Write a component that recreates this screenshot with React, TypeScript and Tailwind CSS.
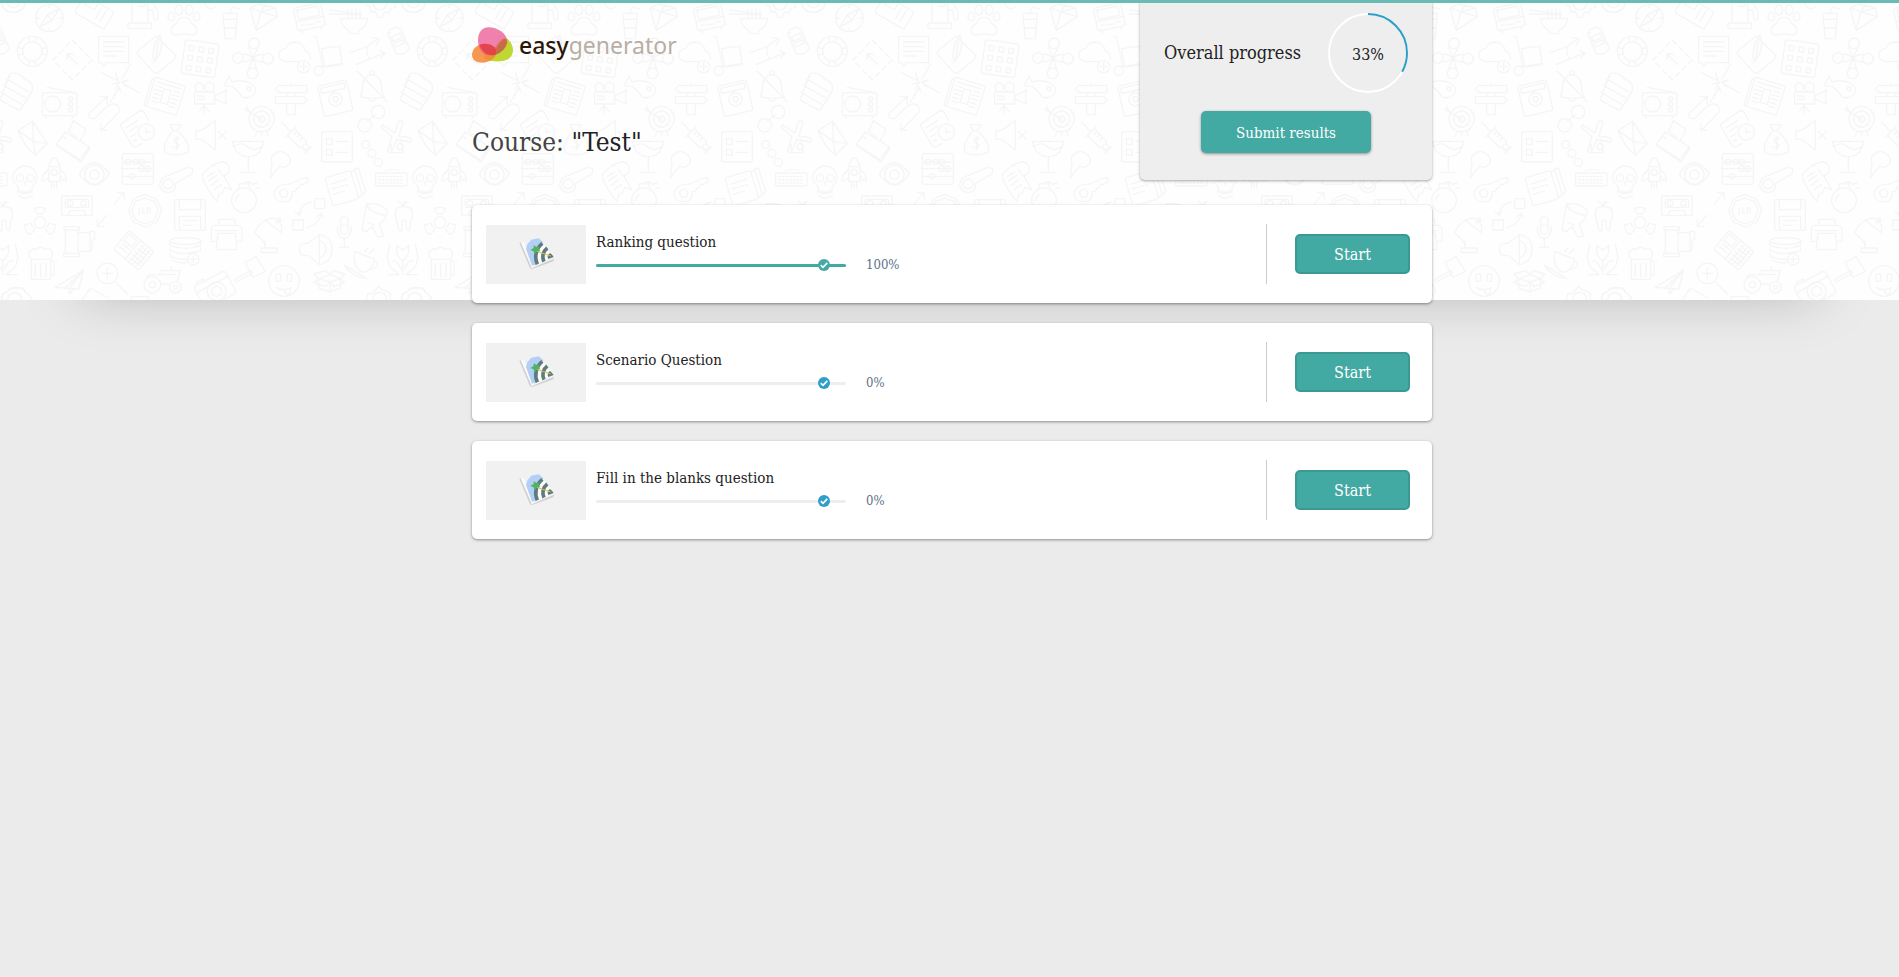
import React from "react";

const courseTitle = "Test";

const questions = [
  { id: "ranking", title: "Ranking question", progress: 100 },
  { id: "scenario", title: "Scenario Question", progress: 0 },
  { id: "blanks", title: "Fill in the blanks question", progress: 0 },
];

/* Doodles of one wallpaper tile, drawn on a 1200 x 900 grid. */
function Doodles() {
  return (
    <g id="doodles" fill="none" stroke="#f5f5f5" strokeWidth="4" strokeLinejoin="round" strokeLinecap="round">
      {/* compass, card, pump, paw */}
      <circle cx="148" cy="54" r="41" />
      <path d="M120 80l22-35 36-20-22 37zM142 45l14 17M148 13v10M148 85v10M107 54h10M179 54h10" />
      <g transform="rotate(30 282 36)"><rect x="232" y="6" width="102" height="60" rx="6" /><path d="M246 -4v34h34v-34M296 14v38M312 14v38" /></g>
      <path d="M396 9v60M444 9v60M384 69h70v16h-70zM414 -5h22v24h-22M444 30h16v24q6 14 14 0v-20l-14-24" />
      <path d="M552 52q-16 0-22 18-18 10-17 22 4 16 22 12 17-4 34 0 20 4 22-12 1-12-17-22-6-18-22-18z" />
      <ellipse cx="537" cy="30" rx="11" ry="15" /><ellipse cx="567" cy="30" rx="11" ry="15" /><ellipse cx="514" cy="50" rx="10" ry="13" /><ellipse cx="590" cy="50" rx="10" ry="13" />
      <path d="M668 40h44l-6 76h-30zM671 58h38M690 40l6-18 24 4M672 84h34" />
      <path d="M776 12l50 12 6 26-64 42-18-68zM750 24l32 12 44-12M782 36l-14 56M782 36l50 14M796 14l-14 22" />
      <g transform="rotate(-12 928 52)"><rect x="886" y="16" width="84" height="70" rx="8" /><rect x="896" y="24" width="64" height="28" /><path d="M886 58h84M898 70h12M946 70h12M918 74h20M898 86v8M956 86v8" /></g>
      <path d="M1022 56h80q-2 26-24 34l-4 10h-24l-4-10q-22-8-24-34zM990 42h96M990 30l60 8M1044 54V30M1056 54V28M1068 54V26M1080 54V30" />
      <path d="M1098 14l12 6 2 16 14-2 6 18h14l6-16 14 4 6-14 14-4v-18M1118 9q4 20 22 20t22-20M1204 9q8 28 36 28t36-28M1222 9q4 14 18 14t18-14M4 9q8 28 36 28t36-28M612 9q14 26 34 12" />
      {/* buoy, crop mark, chat, feather, calendar */}
      <circle cx="97" cy="154" r="45" /><circle cx="97" cy="154" r="29" />
      <path d="M85 111l5 15M109 111l-5 15M85 197l5-15M109 197l-5-15M54 142l15 5M54 166l15-5M140 142l-15 5M140 166l-15-5" />
      <path d="M217 120l60 60-60 60-58-60z" strokeDasharray="16 12" /><path d="M234 194l-34-32M200 178v-16h20" />
      <path d="M296 109h90v79h-66l-10 10-4-10h-10zM310 126h62M310 140h62M310 154h62M310 168h40" />
      <path d="M468 108l56 54q6 8 0 14l-50 42q-6 4-12 0l-48-54q-6-8 0-12zM462 190q-10-50 18-86 14 36-12 76M466 180l10-60" />
      <g transform="rotate(8 600 176)"><rect x="549" y="125" width="102" height="102" rx="8" />
        {[148, 178, 208].map((y) => [570, 600, 630].map((x) => <rect key={`${x}-${y}`} x={x - 7} y={y - 7} width="14" height="14" />))}
      </g>
      <circle cx="762" cy="130" r="16" /><circle cx="758" cy="220" r="16" /><circle cx="714" cy="174" r="16" /><circle cx="804" cy="176" r="16" />
      <path d="M726 162q14-2 32 12l-12-32M774 142l-16 32q18-14 34-10M726 186q14 2 32-12l-12 32M770 206l-12-32q18 14 34 12" />
      <path d="M895 184h-38q-20-2-20-20 2-18 20-18 6-20 30-20 24 2 28 26 18 6 16 26" /><circle cx="911" cy="200" r="18" /><path d="M911 190v20M901 200h20" />
      <path d="M940 110l10 2 18 86M962 200l66-10" /><circle cx="956" cy="212" r="14" /><rect x="969" y="142" width="54" height="56" transform="rotate(-8 996 170)" />
      <path d="M1050 158l50-18 30-22M1118 114l18 2-6 20M1068 194l40-16 42-18M1140 150l16 10-14 14M1104 140q-8 16 4 38" />
      <g transform="rotate(-24 1195 122)"><path d="M1174 90h8v-8h26v8h8v66q-20 16-42 0zM1180 104h30v14h-30zM1180 124h30v12h-30z" /></g>
      {/* shop, radio, arrows, burst, paper, film, fish, sign, washer, bell */}
      <path d="M30 222q14-6 28 2l34 24q8 10 4 26l-36 58-60-32zM20 236l66 40M10 256l68 38M2 276l64 38M30 222l-14 28" />
      <path d="M216 276l-74-14M134 349l6 6M222 349l-6 6" /><rect x="127" y="278" width="104" height="69" rx="8" /><circle cx="158" cy="312" r="24" /><circle cx="212" cy="296" r="6" /><circle cx="212" cy="313" r="6" /><circle cx="212" cy="330" r="6" />
      <path d="M300 290h22v22M322 290l-48 44q-14 14-2 20 10 4 18-4l30-30q14-14 32-4 14 12 0 26l-48 48M302 372v18h18" />
      <path d="M304 218l46 22M346 216l8 26M390 194l-22 40M418 278l-46-26M332 306l26-46M386 240l-22 6 16 14M340 252l18-6-12 20M358 262l4 14" />
      <g transform="rotate(17 495 290)"><rect x="450" y="242" width="94" height="92" rx="3" /><path d="M450 250h-8v76q0 8 10 8M460 254h74M460 266h20M460 278h20M460 290h20M460 302h20M460 314h20M514 266h20M514 278h20M514 290h20M514 302h20M514 314h20" /><rect x="486" y="268" width="22" height="42" /></g>
      <circle cx="598" cy="262" r="13" /><circle cx="629" cy="261" r="14" /><path d="M584 276h60v36h-60zM592 288h20v10h-20M644 290l34-20v42l-34-16M612 312v28M612 316l-14 20M612 316l16 20" />
      <path d="M672 256l16-28 8 18q30-10 60 6 16 16 8 28-20 22-40 8-8-14-28-28z" /><circle cx="747" cy="266" r="6" />
      <path d="M838 256h82v22h-82l-12-11zM826 290h84l12 10-12 11h-84zM860 312v32h26v-32M872 250v6M860 278v12M886 278v12" />
      <g transform="rotate(-13 1005 296)"><rect x="962" y="248" width="88" height="94" rx="6" /><rect x="970" y="256" width="72" height="16" /><circle cx="1006" cy="298" r="20" /><circle cx="1006" cy="298" r="8" /></g>
      <path d="M1080 290q8-10 8-34 4-30 28-32 24 2 28 32 0 24 10 34-36 10-74 0zM1072 214l90 92M1106 296q10 18 22 0" /><circle cx="1117" cy="218" r="7" />
      {/* envelope, briefcase, note, bag, mute, target, syringe, list, chain, mill */}
      <path d="M54 392l44-28 44 66-36 36q-36-30-52-74zM54 392l46 32 -2-60M100 424l42 6M100 424l6 42" />
      <path d="M220 362l38 26-16 32M220 362l-14 32 24 18M168 434l28-38 74 46-6 12-22 32zM168 434l70 44 28-34M190 410l10 6" />
      <path d="M360 374l60-42q8-2 12 4l14 26M360 374l36 62q6 8 14 4l16-10M378 384l34-22M384 396l30-18M392 410l16-8M400 424l12-6" /><circle cx="439" cy="396" r="24" /><path d="M438 382v16l12-4" />
      <path d="M510 374h34l-12 18q38 32 34 62-30 20-70 4-12-26 24-66zM518 392h16M538 416q-12-8-16 4 4 10 10 10 10 6 4 12-8 6-16-2M530 410v40" />
      <path d="M588 392h16l42-30v88l-42-32h-16zM654 394l26 24M680 394l-26 24" />
      <circle cx="785" cy="357" r="38" /><circle cx="785" cy="357" r="24" /><circle cx="785" cy="357" r="9" /><path d="M734 326l50 32M740 318l8 18M770 394l-4 16M784 396v12M800 394l4 14" />
      <g transform="rotate(46 890 415)"><rect x="864" y="400" width="56" height="28" rx="4" /><path d="M824 414h40M876 400v12M888 400v12M900 400v12M920 406h14v16h-14M940 400v28M864 392v44" /></g>
      <rect x="965" y="395" width="92" height="91" rx="6" /><rect x="979" y="416" width="18" height="17" /><rect x="979" y="449" width="18" height="17" /><path d="M1008 424h38M1008 457h38" />
      <circle cx="1134" cy="336" r="20" /><circle cx="1094" cy="376" r="20" /><path d="M1102 364l24-20" /><circle cx="1097" cy="434" r="12" /><circle cx="1116" cy="460" r="12" /><circle cx="1135" cy="487" r="12" />
      <path d="M1196 362l14 2-14 44 38 6-2 12-42-8-16 40-12-4 14-44-32-28 4-8 36 26zM1172 430l4 28h34l-6-40" /><circle cx="1200" cy="440" r="9" />
      {/* skull, rocket, eye, abacus, thermometer, scroll, goblet, cone, bomb, key, book, keyboard */}
      <path d="M54 560q-20-14-14-38 12-24 36-24 28 2 34 26 4 24-14 36v10l-20 8-22-8zM52 574q24 14 46 0M54 586q22 16 44 0" /><circle cx="60" cy="534" r="11" /><circle cx="92" cy="534" r="11" /><path d="M76 544v12" />
      <path d="M146 544v-42q4-22 16-30 14 8 18 30v42zM146 500h34M144 510l-12 12-6 20h10l10-12M182 510l12 12 6 20h-10l-8-12M154 544v18M162 548v18M170 544v18" /><circle cx="163" cy="517" r="9" />
      <path d="M238 522q44-68 90 0-46 66-90 0z" /><circle cx="283" cy="524" r="29" /><circle cx="283" cy="524" r="14" />
      <rect x="367" y="461" width="93" height="92" rx="5" /><path d="M367 486h93M367 506h93M367 529h93" /><circle cx="384" cy="486" r="8" /><circle cx="406" cy="486" r="8" /><circle cx="426" cy="486" r="8" /><circle cx="424" cy="506" r="8" /><circle cx="442" cy="506" r="8" /><circle cx="397" cy="529" r="8" />
      <path d="M506 526l52-22q20-4 20 6 0 12-10 16l-42 24q4 20-16 27-24 2-31-19 0-28 27-32z" /><circle cx="504" cy="552" r="15" />
      <path d="M606 524q28-32 62-40 22 6 20 28-6 16-24 12l-8-16M606 524q6 36 44 80l8-22 10-4 6-16 22 8-26-44M622 530l22-14M626 542l24-16M634 556l24-18M644 568l20-14" />
      <path d="M698 424h92q-2 38-36 46h-16q-38-10-40-46zM704 438q22-14 40 2t42 0M745 472v44M722 517h46" />
      <path d="M816 492q-8-24 12-34 20-8 30 4 18 10 12 28-14 18-32 8l-28 36 6-42z" />
      <circle cx="732" cy="601" r="37" /><path d="M718 566l-2-14 30-2 4 16M732 550q10-12 26 4l14-6M768 566l8-2M706 602q2-14 14-20" />
      <path d="M870 552l46-20q12 2 8 12l-14 10-8-2-4 10-8 2-2 8-12 4q4 24-20 30-30 0-34-24 6-30 34-28z" /><circle cx="851" cy="580" r="12" />
      <g transform="rotate(-17 1035 560)"><rect x="984" y="518" width="80" height="88" rx="6" /><path d="M996 540h50M996 556h50M996 572h34M1064 522h14v80h-14M1078 518h12v70l-6 10" /></g>
      <rect x="1127" y="519" width="94" height="39" rx="3" /><path d="M1150 518q20-16 50-6M1136 530h76M1136 540h76M1136 549h76" strokeDasharray="5 6" />
      {/* radiation, cassette, arrows, sign, floppy, printer, dish, flow, mic, dryer, tooth */}
      <circle cx="120" cy="668" r="17" /><path d="M102 626q18-8 34 0l-8 16h-16zM74 674l18-4 12 20-14 14q-16-10-16-30zM166 674l-18-4-12 20 14 14q16-10 16-30z" />
      <rect x="185" y="588" width="92" height="58" rx="3" /><rect x="196" y="598" width="70" height="24" rx="4" /><circle cx="210" cy="610" r="8" /><circle cx="251" cy="610" r="8" /><path d="M204 646l6-14h42l6 14" />
      <path d="M342 612l28-32M352 578h20v20M320 646l-28 32M292 660v20h20" />
      <path d="M435 583l34 14 16 34-14 34-34 16-36-14-15-34 14-36zM435 594l28 10 12 28-12 28-28 12-28-12-12-28 12-28zM418 624v18l-4 2M428 624v16h8M442 640v-16h8v16" />
      <rect x="524" y="599" width="92" height="92" rx="5" /><path d="M538 599v30h64v-30M538 691v-42h64v42M550 662h42M550 676h26" />
      <path d="M656 676v-18h48v18M644 676h72q10 4 10 12v36h-18M632 724h18M650 724h-16v-38q2-8 10-10M654 700h52l6 49h-64zM646 692h66" />
      <path d="M796 660q-26 20-32 38l26 26 8 20M784 744h48v14h-48zM798 744l-4-20M796 660l48 38q4-20-6-32-16-20-42-6zM826 672l16-14" /><circle cx="836" cy="660" r="6" />
      <rect x="944" y="596" width="30" height="30" /><rect x="879" y="660" width="31" height="30" /><path d="M934 606q-34 8-38 38M886 634l10 12 10-12M920 682q34-6 42-36M950 652l12-12 8 14" />
      <rect x="1022" y="649" width="22" height="54" rx="11" /><path d="M1012 680q0 34 21 34t21-34M1033 714v28M1018 742h28M1022 676h22" />
      <path d="M1100 612q40-6 62 20-2 26-24 40l12 36-16 4-18-32-16 14-14-4zM1100 612q8 26 54 34M1104 668l20 8" />
      <path d="M1190 624q22-10 44 2 6 22-2 40l-4 24-8-2-2-24q-8-8-12 2v28l-10-6-6-26q-8-18 0-38zM1196 604l14 14 10-14M1212 604v12" />
      {/* beer, pipe, calculator, coins, speaker, cup, tulip */}
      <path d="M94 838v-62q-14-10-4-22 8-10 20-6 12-12 24 0 14-8 22 8 4 14-4 18v64zM94 778h58M106 790v40M122 790v40M138 790v40M152 784h10v42h-10" />
      <path d="M192 680h46v10h-46zM196 690v70M234 690v70M190 760h48v10h-48zM234 698h36v56h-36M270 694h14v24l-8 4v30h-6" />
      <g transform="rotate(40 402 752)"><rect x="352" y="716" width="98" height="72" rx="4" /><path d="M398 716v72M360 724h30v24h-30zM406 728h38M406 740h38M406 752h38M406 764h38M406 776h38M414 722v60M426 722v60M438 722v60M360 758h30M360 770h30" /></g>
      <ellipse cx="556" cy="723" rx="46" ry="10" /><path d="M510 726v10q46 18 92 0v-10M510 744v8q40 18 92 0v-8M510 762v8q24 10 52 8M516 780q16 10 44 8" /><circle cx="580" cy="778" r="17" /><path d="M580 768v20M570 778h20" />
      <path d="M958 704v90l-34-28h-18q-16-18 0-36h18zM958 704q38 6 38 44t-38 46M958 722q20 6 20 26t-20 26" />
      <path d="M1064 754l60 24q-8 38-36 38-30-8-24-62zM1122 782q16 6 8 18-8 10-20 4M1034 796l66 40M1034 796q20 34 66 40M1094 756l10-12M1108 762l16-18" />
      <path d="M1190 736l18 14 18-14q4 34-18 46-22-12-18-46zM1208 782v40M1170 734q-14 40 0 66l28 24h-34M1246 734q14 40 0 66l-28 24h34M1176 786q6-10 18 4l10 18M1240 786q-6-10-18 4l-10 18" />
      {/* plane, lens, tractor, photo, gavel, smiley, box */}
      <path d="M250 810l-84 52 30 2 40 4zM196 864l54-54-42 56v16l12-14" />
      <circle cx="322" cy="820" r="31" /><path d="M344 844l38 38M322 804v32M306 820h32" />
      <circle cx="457" cy="854" r="25" /><circle cx="457" cy="854" r="9" /><circle cx="526" cy="862" r="17" /><circle cx="526" cy="862" r="6" /><path d="M440 832l10-8h30v-12h60l-8 32M482 852h26M482 824h44M514 800v12" />
      <g transform="rotate(-28 643 865)"><rect x="590" y="832" width="106" height="76" rx="10" /><path d="M590 852h106M604 832v-8h22v8" /><circle cx="645" cy="876" r="28" /><circle cx="645" cy="876" r="15" /></g>
      <path d="M702 840l50-28 4 8-46 26zM736 788l22 44 38-18-28-44zM736 788l32-18" />
      <circle cx="852" cy="843" r="46" /><rect x="828" y="821" width="14" height="24" rx="7" /><rect x="861" y="821" width="14" height="24" rx="7" /><path d="M830 862q22 14 44 0M852 868q2 16 14 14 8-4 4-16" />
      <path d="M956 836v28l34 12 32-12v-28M990 846v30M956 836l34 10-12 14-36-12zM1022 836l-32 10 12 14 32-12zM956 836l-14-14 36-10 12 12M1022 836l12-14-34-10-10 12M956 836l34-12 32 12" />
      <path d="M1100 900l4-20 14 2 8-12 10-10 12 10 16 6 8 6-2 14 8 8M1118 900q2-22 22-22t20 22M1206 900q-2-22 16-24 10-16 26-12 24-4 28 14 16 6 18 22M1222 900q4-22 22-22t22 22M6 900q-2-22 16-24 10-16 26-12 24-4 28 14 16 6 18 22M22 900q4-22 22-22t22 22M246 900l26-36 52 30M394 900v-10h50v10" />
    </g>
  );
}

function Wallpaper() {
  return (
    <div
      aria-hidden="true"
      className="absolute inset-x-0 top-0 h-[300px] bg-[#fefefe] shadow-[0_70px_60px_-80px_rgba(0,0,0,0.27)]"
    >
      <svg className="block h-full w-full">
        <defs>
          <pattern id="tile" width="400" height="300" patternUnits="userSpaceOnUse">
            <g transform="scale(0.33333)">
              <Doodles />
              <use href="#doodles" x="-1200" />
            </g>
          </pattern>
        </defs>
        <rect width="100%" height="100%" fill="url(#tile)" />
      </svg>
    </div>
  );
}

function Logo() {
  return (
    <a href="#home" className="flex h-9 items-center gap-[6px]">
      <svg viewBox="0 0 123 108" className="h-9 w-[41px]" aria-hidden="true">
        <path d="M98 34c14 0 25 19 25 36 0 21-17 32-40 33-20 1-46-2-47-12 0-11 14-15 26-24 14-11 22-32 36-33z" fill="#bfd730" />
        <path d="M0 83C0 66 16 51 36 50c22-1 37 10 37 25 0 18-21 32-42 32C12 107 0 98 0 83z" fill="#f58634" fillOpacity="0.85" />
        <path d="M18 38C19 15 31 1 50 1c27 0 54 19 56 41 1 20-24 43-54 43-20 0-35-22-34-47z" fill="#e9508c" fillOpacity="0.72" />
        <path d="M23 53c22-8 50 2 50 22 0 3-1 6-3 9-20 4-40-8-47-31z" fill="#e03a3e" fillOpacity="0.75" />
        <path d="M70 84c3-6 4-12 1-18 8-10 15-26 26-31 4 1 8 4 8 10-2 18-18 33-35 39z" fill="#c4683c" fillOpacity="0.8" />
      </svg>
      <span className="font-['Noto_Sans',sans-serif] text-[23px] leading-[34px] text-[#b9aea4]">
        <span className="font-medium text-[#2b1708]">easy</span>generator
      </span>
    </a>
  );
}

function ProgressRing({ value }: { value: number }) {
  return (
    <div className="relative flex size-20 items-center justify-center">
      <svg viewBox="0 0 80 80" className="absolute inset-0 size-20 -rotate-90" aria-hidden="true" fill="none" strokeWidth="2">
        <circle cx="40" cy="40" r="39" stroke="#fff" />
        <circle cx="40" cy="40" r="39" stroke="#2d9fc9" pathLength={100} strokeDasharray={`${value} 100`} />
      </svg>
      <span className="relative pt-1 text-[16px] leading-5">{value}%</span>
    </div>
  );
}

function Thumbnail() {
  return (
    <svg viewBox="78 105 300 177" className="h-[59px] w-[100px] shrink-0 bg-[#f1f1f1]" aria-hidden="true">
      <path d="M212 236l70-30-2 8-66 24z" fill="#cfcfcf" />
      <path d="M180 158l12-2 30 72-10 8z" fill="#fafafa" />
      <path d="M178 158l4-1 32 74-3 6z" fill="#cfcfcf" />
      <path d="M214 230L282 202l-36-46-36 20z" fill="#fbfbfb" />
      <path d="M216 227l-18-50 4-14 12-14 22-4 14 12q-26 26-20 66z" fill="#b4cff5" />
      <g fill="none" stroke="#5f7c7c" strokeWidth="11">
        <path d="M247 160A53 53 0 0 0 232 223" />
        <path d="M262 174A33 33 0 0 0 252 215" />
      </g>
      <path d="M270 189q6 4 11 12l-16 6q-6-10 5-18z" fill="#5f7c7c" />
      <path d="M230 184l42 14" stroke="#e0c052" strokeWidth="3" />
      <path d="M211 180l10-6 0-8 10 6 8-2-2 8 4 6-10 0-8 10-2-10z" fill="#4fb364" />
    </svg>
  );
}

function ProgressBar({ value, labelledBy }: { value: number; labelledBy: string }) {
  const done = value === 100;
  return (
    <div
      role="progressbar"
      aria-labelledby={labelledBy}
      aria-valuenow={value}
      className="relative h-[3px] w-[250px] rounded-full bg-[#eeeeee]"
    >
      <div className="h-full rounded-full bg-[#43a9a3]" style={{ width: `${value}%` }} />
      <svg
        viewBox="0 0 12 12"
        className={`absolute -top-[5px] right-4 size-3 ${done ? "text-[#43a9a3]" : "text-[#2d9fc9]"}`}
        aria-hidden="true"
      >
        <circle cx="6" cy="6" r="6" fill="currentColor" />
        <path d="M2.8 6.2l2.2 2.2 4.3-4.6" fill="none" stroke="#fff" strokeWidth="1.7" />
      </svg>
    </div>
  );
}

export default function App() {
  return (
    <div className="relative min-h-screen bg-[#ebebeb] font-['Roboto_Slab','DejaVu_Serif_Condensed','DejaVu_Serif',serif] text-[#222]">
      <Wallpaper />
      <div className="absolute inset-x-0 top-0 z-10 h-[3px] bg-[#68bcb4]" />
      <div className="relative pl-[5px]">
        <div className="mx-auto max-w-[960px]">
          <header className="flex items-start justify-between">
            <div className="flex flex-col pt-[27px]">
              <Logo />
              <h1 className="mt-[61px] text-[26px] leading-9 font-light text-[#444]">
                Course: <span className="font-normal text-[#222]">"{courseTitle}"</span>
              </h1>
            </div>
            <section className="flex h-[180px] w-[292px] flex-col items-center rounded-b-[5px] bg-[#eeeeee] pt-[13px] shadow-[0_1px_3px_rgba(0,0,0,0.35)]">
              <div className="flex w-full items-center justify-between px-6">
                <h2 className="text-[18px] leading-6">Overall progress</h2>
                <ProgressRing value={33} />
              </div>
              <button className="mt-[18px] h-[42px] w-[170px] rounded-[5px] bg-[#43a9a3] pt-[3px] text-[15px] font-medium text-white shadow-[0_1px_3px_rgba(0,0,0,0.4)]">
                Submit results
              </button>
            </section>
          </header>

          <ul className="mt-[25px] flex flex-col gap-5 pb-10">
            {questions.map((q) => (
              <li
                key={q.id}
                className="flex h-[98px] items-center rounded-[5px] bg-white pr-[22px] pl-[14px] shadow-[0_1px_3px_rgba(0,0,0,0.4)]"
              >
                <Thumbnail />
                <div className="ml-[10px] flex-1">
                  <h3 id={q.id} className="text-[15px] leading-[22px]">{q.title}</h3>
                  <div className="flex h-6 items-center gap-5">
                    <ProgressBar value={q.progress} labelledBy={q.id} />
                    <span className="text-[13px] leading-5 text-[#5c7184]">{q.progress}%</span>
                  </div>
                </div>
                <div className="h-[60px] w-px shrink-0 bg-[#cccccc]" />
                <button className="ml-7 h-10 w-[115px] rounded-[5px] border-2 border-[#3b9992] bg-[#43a9a3] pt-px text-[16px] font-medium text-white">
                  Start
                </button>
              </li>
            ))}
          </ul>
        </div>
      </div>
    </div>
  );
}
